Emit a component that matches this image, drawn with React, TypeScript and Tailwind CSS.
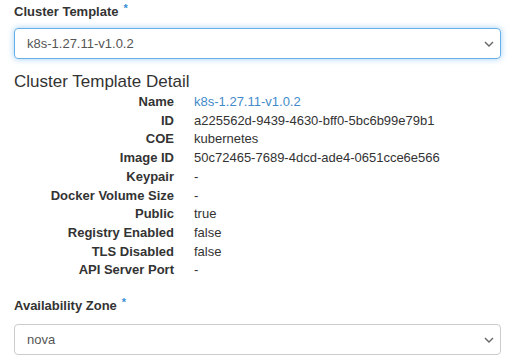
import React from "react";

const rows: [string, string, boolean?][] = [
  ["Name", "k8s-1.27.11-v1.0.2", true],
  ["ID", "a225562d-9439-4630-bff0-5bc6b99e79b1"],
  ["COE", "kubernetes"],
  ["Image ID", "50c72465-7689-4dcd-ade4-0651cce6e566"],
  ["Keypair", "-"],
  ["Docker Volume Size", "-"],
  ["Public", "true"],
  ["Registry Enabled", "false"],
  ["TLS Disabled", "false"],
  ["API Server Port", "-"],
];

function Chevron() {
  return (
    <svg width="10" height="6" viewBox="0 0 10 6" className="shrink-0">
      <path d="M1 1 L5 5 L9 1" fill="none" stroke="#666" strokeWidth="1.4" />
    </svg>
  );
}

function Label({ text }: { text: string }) {
  return (
    <div className="flex items-start text-[13px] font-bold text-[#333] leading-[18px]">
      <span>{text}</span>
      <span className="ml-[5px] text-[11px] text-[#3a8fd6] leading-[12px] mt-[-1px]">*</span>
    </div>
  );
}

export default function App() {
  return (
    <div
      className="w-[518px] h-[364px] bg-white px-[14px] pt-[3px] overflow-hidden"
      style={{ fontFamily: '"Liberation Sans", Arial, sans-serif' }}
    >
      <Label text="Cluster Template" />
      <div className="mt-[7px] w-[487px] h-[31px] rounded-[4px] border border-[#66afe9] shadow-[0_0_6px_rgba(102,175,233,0.6)] flex items-center justify-between pl-[12px] pr-[6px]">
        <span className="text-[13px] text-[#555]">k8s-1.27.11-v1.0.2</span>
        <Chevron />
      </div>
      <div className="mt-[13px] text-[17px] text-[#333] leading-[20px]">Cluster Template Detail</div>
      <div className="mt-[1px] text-[13px] leading-[18.7px] text-[#333]">
        {rows.map(([k, v, link]) => (
          <div key={k} className="flex">
            <div className="w-[160px] text-right font-bold shrink-0">{k}</div>
            <div className={"ml-[20px] " + (link ? "text-[#428bca]" : "")}>{v}</div>
          </div>
        ))}
      </div>
      <div className="mt-[17px]">
        <Label text="Availability Zone" />
      </div>
      <div className="mt-[9px] w-[487px] h-[31px] rounded-[4px] border border-[#ccc] flex items-center justify-between pl-[12px] pr-[6px]">
        <span className="text-[13px] text-[#555]">nova</span>
        <Chevron />
      </div>
    </div>
  );
}
